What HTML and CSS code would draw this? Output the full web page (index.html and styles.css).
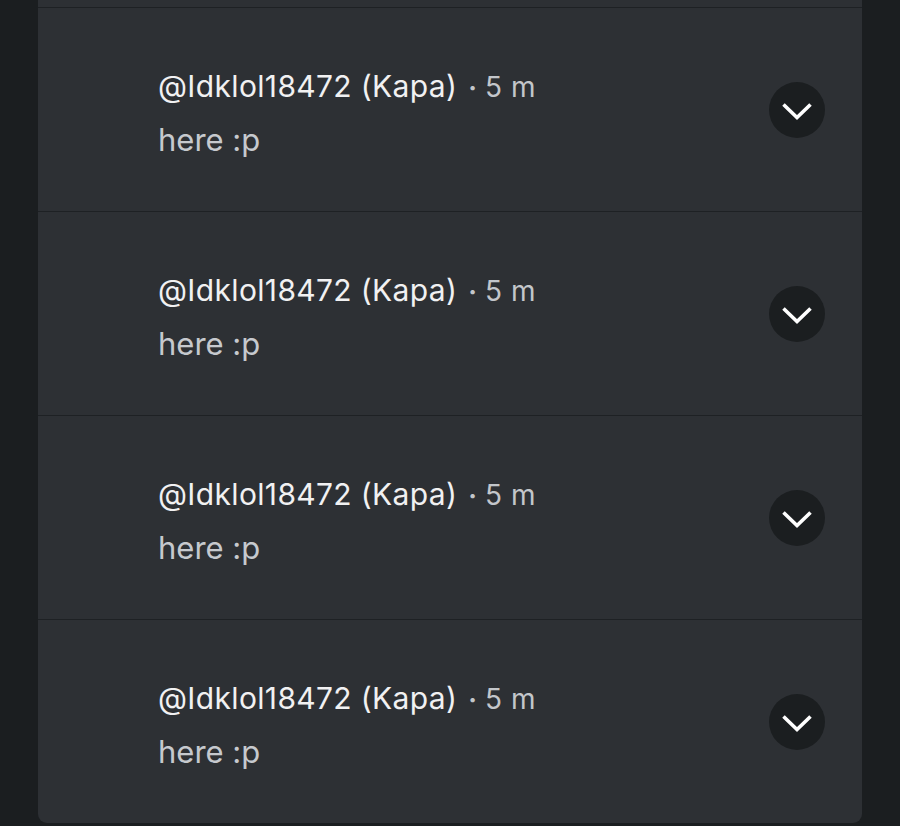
FILE: index.html
```html
<!DOCTYPE html>
<html lang="en">
<head>
    <meta charset="UTF-8">
    <meta name="viewport" content="width=device-width, initial-scale=1.0">
    <title>Replies</title>
    <link rel="stylesheet" href="styles.css">
</head>
<body>
    <div class="card">
        <div class="prev"></div>

        <div class="reply">
            <div class="text">
                <p class="meta"><span class="user">@Idklol18472 (Kapa)</span><span class="dot">&middot;</span><span class="time">5 m</span></p>
                <p class="msg">here :p</p>
            </div>
            <button class="expand" aria-label="Expand">
                <svg viewBox="0 0 32 32" width="32" height="32"><path d="M2.5 10.5 L16 23.5 L29.5 10.5" fill="none" stroke="#fff" stroke-width="3.6"/></svg>
            </button>
        </div>

        <div class="reply">
            <div class="text">
                <p class="meta"><span class="user">@Idklol18472 (Kapa)</span><span class="dot">&middot;</span><span class="time">5 m</span></p>
                <p class="msg">here :p</p>
            </div>
            <button class="expand" aria-label="Expand">
                <svg viewBox="0 0 32 32" width="32" height="32"><path d="M2.5 10.5 L16 23.5 L29.5 10.5" fill="none" stroke="#fff" stroke-width="3.6"/></svg>
            </button>
        </div>

        <div class="reply">
            <div class="text">
                <p class="meta"><span class="user">@Idklol18472 (Kapa)</span><span class="dot">&middot;</span><span class="time">5 m</span></p>
                <p class="msg">here :p</p>
            </div>
            <button class="expand" aria-label="Expand">
                <svg viewBox="0 0 32 32" width="32" height="32"><path d="M2.5 10.5 L16 23.5 L29.5 10.5" fill="none" stroke="#fff" stroke-width="3.6"/></svg>
            </button>
        </div>

        <div class="reply">
            <div class="text">
                <p class="meta"><span class="user">@Idklol18472 (Kapa)</span><span class="dot">&middot;</span><span class="time">5 m</span></p>
                <p class="msg">here :p</p>
            </div>
            <button class="expand" aria-label="Expand">
                <svg viewBox="0 0 32 32" width="32" height="32"><path d="M2.5 10.5 L16 23.5 L29.5 10.5" fill="none" stroke="#fff" stroke-width="3.6"/></svg>
            </button>
        </div>
    </div>
</body>
</html>
```

FILE: styles.css
```css
body {
    margin: 0;
    padding: 0 38px;
    background-color: #1b1e20;
    font-family: Inter, "Noto Sans", sans-serif;
    height: 826px;
    overflow: hidden;
}
.card {
    background-color: #2d3034;
    border-radius: 0 0 9px 9px;
}
.prev {
    height: 7px;
}
.reply {
    height: 203px;
    border-top: 1px solid #1e2124;
    display: flex;
    align-items: center;
    padding: 0 37px 0 120px;
}
.text {
    flex: 1;
    margin-top: 6px;
}
.meta {
    margin: 0;
    line-height: 40px;
    color: #f1f1f2;
}
.user {
    font-size: 30px;
    letter-spacing: 0.35px;
}
.dot {
    font-size: 26px;
    font-weight: 700;
    color: #c3c6ca;
    margin: 0 8px 0 11px;
}
.time {
    font-size: 28px;
    color: #c3c6ca;
    letter-spacing: 0.5px;
}
.msg {
    margin: 9px 0 0;
    font-size: 31px;
    line-height: 40px;
    color: #c6c9ce;
}
.expand {
    width: 56px;
    height: 56px;
    border-radius: 50%;
    border: none;
    background-color: #1b1e20;
    display: flex;
    align-items: center;
    justify-content: center;
    padding: 0;
}
```
